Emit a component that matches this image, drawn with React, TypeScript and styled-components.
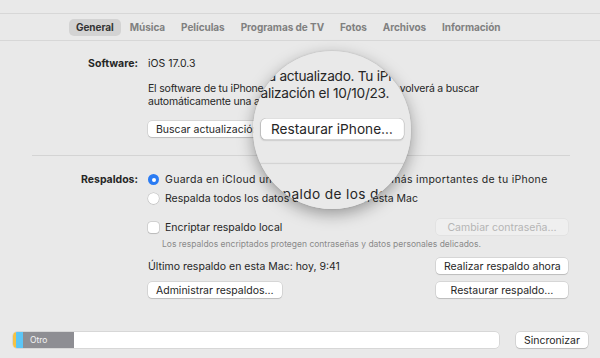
import styled, { createGlobalStyle } from "styled-components";

const GlobalStyle = createGlobalStyle`
  html, body {
    margin: 0;
    padding: 0;
    background: #e9e9e9;
  }
  * {
    box-sizing: border-box;
  }
`;

const Window = styled.div`
  position: relative;
  width: 600px;
  height: 358px;
  overflow: hidden;
  background: #e9e9e9;
`;

const Page = styled.div`
  width: 600px;
  height: 358px;
  background: #e9e9e9;
  font-family: Inter, "Noto Sans", sans-serif;
  font-size: 10.5px;
  color: #262626;
`;

const TabBar = styled.nav`
  margin-top: 13px;
  height: 28px;
  border-top: 1px solid #d7d7d7;
  border-bottom: 1px solid #d7d7d7;
  display: flex;
  align-items: center;
  padding-left: 69px;
  gap: 2px;
`;

const Tab = styled.div<{ $active?: boolean }>`
  height: 17px;
  padding: 0 7px;
  display: flex;
  align-items: center;
  border-radius: 5px;
  font-weight: 700;
  font-size: 10px;
  letter-spacing: -0.05px;
  color: ${({ $active }) => ($active ? "#333" : "#808080")};
  background: ${({ $active }) => ($active ? "#d3d3d3" : "none")};
`;

const Section = styled.section<{ $top: number }>`
  margin: ${({ $top }) => $top}px 0 0 32px;
  width: 538px;
  display: grid;
  grid-template-columns: 106px 1fr;
  column-gap: 10px;
`;

const Label = styled.div<{ $line?: number }>`
  text-align: right;
  font-weight: 700;
  line-height: ${({ $line }) => $line ?? 13}px;
`;

const Column = styled.div`
  display: flex;
  flex-direction: column;
`;

const Text = styled.div`
  line-height: 13px;
`;

const Description = styled.p`
  margin: 12px 0 0;
  line-height: 13px;
  width: 340px;
  letter-spacing: -0.2px;
`;

const ButtonRow = styled.div<{ $top?: number }>`
  display: flex;
  align-items: center;
  justify-content: space-between;
  height: 16px;
  margin-top: ${({ $top }) => $top ?? 0}px;
  padding-right: 2px;
`;

const Buttons = styled.div`
  display: flex;
  gap: 8px;
  margin-top: 13px;
`;

const Button = styled.button<{ $width?: number; $disabled?: boolean }>`
  height: 16px;
  padding: 0 8px;
  width: ${({ $width }) => ($width ? `${$width}px` : "auto")};
  border: none;
  border-radius: 4px;
  font-family: inherit;
  font-size: 10.5px;
  color: ${({ $disabled }) => ($disabled ? "#b5b5b5" : "#262626")};
  background: ${({ $disabled }) => ($disabled ? "#efefef" : "#fff")};
  box-shadow: ${({ $disabled }) =>
    $disabled
      ? "0 0 0 0.5px rgba(0,0,0,0.06)"
      : "0 0 0 0.5px rgba(0,0,0,0.16), 0 1px 1px rgba(0,0,0,0.12)"};
  white-space: nowrap;
  flex-shrink: 0;
`;

const Divider = styled.hr`
  margin: 18px 0 0 32px;
  width: 538px;
  border: none;
  border-top: 1px solid #d4d4d4;
`;

const RadioList = styled.div`
  display: flex;
  flex-direction: column;
`;

const Option = styled.label<{ $spacing?: number }>`
  display: flex;
  align-items: center;
  gap: 6px;
  height: 19px;
  letter-spacing: ${({ $spacing }) => $spacing ?? 0}px;
`;

const Radio = styled.span<{ $checked?: boolean }>`
  width: 11px;
  height: 11px;
  border-radius: 50%;
  background: ${({ $checked }) => ($checked ? "#2a7bf3" : "#fff")};
  box-shadow: ${({ $checked }) =>
    $checked ? "none" : "0 0 0 0.5px rgba(0,0,0,0.18), 0 0.5px 1px rgba(0,0,0,0.12)"};
  display: flex;
  align-items: center;
  justify-content: center;
  &::after {
    content: "";
    display: ${({ $checked }) => ($checked ? "block" : "none")};
    width: 4px;
    height: 4px;
    border-radius: 50%;
    background: #fff;
  }
`;

const Checkbox = styled.span`
  width: 11px;
  height: 11px;
  border-radius: 3px;
  background: #fff;
  box-shadow: 0 0 0 0.5px rgba(0, 0, 0, 0.18), 0 0.5px 1px rgba(0, 0, 0, 0.12);
`;

const Hint = styled.div`
  margin: 3px 0 0 14px;
  font-size: 8.5px;
  line-height: 12px;
  color: #8a8a8a;
`;

const Footer = styled.footer`
  margin-top: 34px;
  display: flex;
  align-items: center;
  padding: 0 12px 0 13px;
  gap: 17px;
`;

const StorageBar = styled.div`
  flex: 1;
  height: 16px;
  display: flex;
  background: #fff;
  border-radius: 4px;
  overflow: hidden;
  box-shadow: 0 0 0 0.5px rgba(0, 0, 0, 0.15);
`;

const Segment = styled.div<{ $color: string; $width: number }>`
  width: ${({ $width }) => $width}px;
  background: ${({ $color }) => $color};
  color: #f4f4f4;
  font-size: 8.5px;
  line-height: 16px;
  padding-left: ${({ $width }) => ($width > 10 ? 7 : 0)}px;
`;

const Magnifier = styled.div`
  position: absolute;
  left: 253px;
  top: 51px;
  width: 158px;
  height: 158px;
  border-radius: 50%;
  overflow: hidden;
  box-shadow: 0 5px 16px rgba(0, 0, 0, 0.35), 0 0 2px rgba(0, 0, 0, 0.15);
`;

const Lens = styled.div`
  position: absolute;
  left: -253px;
  top: -51px;
  transform: scale(1.3);
  transform-origin: 322px 129px;
`;

const tabs = [
  "General",
  "Música",
  "Películas",
  "Programas de TV",
  "Fotos",
  "Archivos",
  "Información",
];

function Pane() {
  return (
    <Page>
      <TabBar>
        {tabs.map((tab, index) => (
          <Tab key={tab} $active={index === 0}>
            {tab}
          </Tab>
        ))}
      </TabBar>

      <Section $top={16}>
        <Label>Software:</Label>
        <Column>
          <Text>iOS 17.0.3</Text>
          <Description>
            El software de tu iPhone está actualizado. Tu iPhone volverá a
            buscar automáticamente una actualización el 10/10/23.
          </Description>
          <Buttons>
            <Button>Buscar actualización</Button>
            <Button>Restaurar iPhone…</Button>
          </Buttons>
        </Column>
      </Section>

      <Divider />

      <Section $top={14}>
        <Label $line={19}>Respaldos:</Label>
        <Column>
          <RadioList>
            <Option $spacing={0.3}>
              <Radio $checked />
              Guarda en iCloud un respaldo de los datos más importantes de tu
              iPhone
            </Option>
            <Option>
              <Radio />
              Respalda todos los datos de tu iPhone en esta Mac
            </Option>
          </RadioList>
          <ButtonRow $top={11}>
            <Option>
              <Checkbox />
              Encriptar respaldo local
            </Option>
            <Button $width={132} $disabled>
              Cambiar contraseña…
            </Button>
          </ButtonRow>
          <Hint>
            Los respaldos encriptados protegen contraseñas y datos personales
            delicados.
          </Hint>
          <ButtonRow $top={8}>
            <Text>Último respaldo en esta Mac: hoy, 9:41</Text>
            <Button $width={132}>Realizar respaldo ahora</Button>
          </ButtonRow>
          <ButtonRow $top={8}>
            <Button>Administrar respaldos…</Button>
            <Button $width={132}>Restaurar respaldo…</Button>
          </ButtonRow>
        </Column>
      </Section>

      <Footer>
        <StorageBar>
          <Segment $color="#f6c244" $width={3} />
          <Segment $color="#5bc6f7" $width={7} />
          <Segment $color="#8e8e93" $width={51}>
            Otro
          </Segment>
        </StorageBar>
        <Button $width={72}>Sincronizar</Button>
      </Footer>
    </Page>
  );
}

export default function App() {
  return (
    <Window>
      <GlobalStyle />
      <Pane />
      <Magnifier aria-hidden>
        <Lens>
          <Pane />
        </Lens>
      </Magnifier>
    </Window>
  );
}
